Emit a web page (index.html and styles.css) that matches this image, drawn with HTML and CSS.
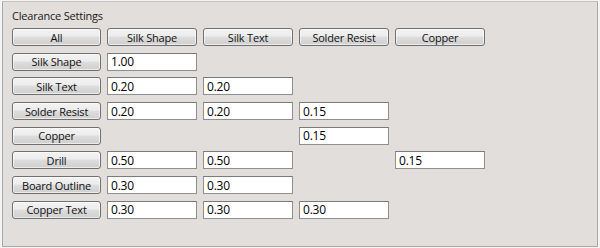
FILE: index.html
```html
<!DOCTYPE html>
<html>
<head lang="en">
    <meta charset="UTF-8">
    <title>Clearance Settings</title>
    <link rel="stylesheet" href="styles.css">
</head>
<body>
    <div class="panel">
        <div class="title">Clearance Settings</div>
        <div class="grid">
            <button class="btn">All</button>
            <button class="btn">Silk Shape</button>
            <button class="btn">Silk Text</button>
            <button class="btn">Solder Resist</button>
            <button class="btn">Copper</button>

            <button class="btn">Silk Shape</button>
            <input class="field" value="1.00">
            <span></span><span></span><span></span>

            <button class="btn">Silk Text</button>
            <input class="field" value="0.20">
            <input class="field" value="0.20">
            <span></span><span></span>

            <button class="btn">Solder Resist</button>
            <input class="field" value="0.20">
            <input class="field" value="0.20">
            <input class="field" value="0.15">
            <span></span>

            <button class="btn">Copper</button>
            <span></span><span></span>
            <input class="field" value="0.15">
            <span></span>

            <button class="btn">Drill</button>
            <input class="field" value="0.50">
            <input class="field" value="0.50">
            <span></span>
            <input class="field" value="0.15">

            <button class="btn">Board Outline</button>
            <input class="field" value="0.30">
            <input class="field" value="0.30">
            <span></span><span></span>

            <button class="btn">Copper Text</button>
            <input class="field" value="0.30">
            <input class="field" value="0.30">
            <input class="field" value="0.30">
            <span></span>
        </div>
    </div>
</body>
</html>
```

FILE: styles.css
```css
html,body{margin:0;padding:0;}
body{
    background:#f4f4f4;
    font-family:"Open Sans","Noto Sans",sans-serif;
    width:600px;
    height:248px;
    overflow:hidden;
}
.panel{
    margin:1px 2px 1px 2px;
    height:244px;
    border:1px solid #a9a9a9;
    border-top-color:#c2c2c2;
    background:#e1dedc;
    padding:0 9px;
    box-sizing:border-box;
    box-sizing:content-box;
    width:576px;
}
.title{
    padding-top:7px;
    font-size:11px;
    line-height:14px;
    color:#1a1a1a;
    letter-spacing:-0.2px;
}
.grid{
    margin-top:5px;
    display:grid;
    grid-template-columns:89px 90px 90px 90px 90px;
    grid-auto-rows:18px;
    column-gap:6px;
    row-gap:6.7px;
}
.btn{
    margin:0;
    padding:0;
    font-family:inherit;
    font-size:11px;
    letter-spacing:-0.2px;
    color:#111;
    border:1px solid #707070;
    border-radius:3px;
    background:linear-gradient(#f3f3f3 0%,#ececec 45%,#dddddd 50%,#cfcfcf 100%);
    box-shadow:inset 0 0 0 1px rgba(255,255,255,.6);
    line-height:15px;
}
.field{
    margin:0;
    padding:0 3px;
    font-family:inherit;
    font-size:12px;
    letter-spacing:-0.2px;
    color:#000;
    background:#fff;
    border:1px solid #8e8f8f;
    border-top-color:#7a7a7a;
    box-sizing:border-box;
    width:90px;
    height:18px;
    outline:none;
}
```
